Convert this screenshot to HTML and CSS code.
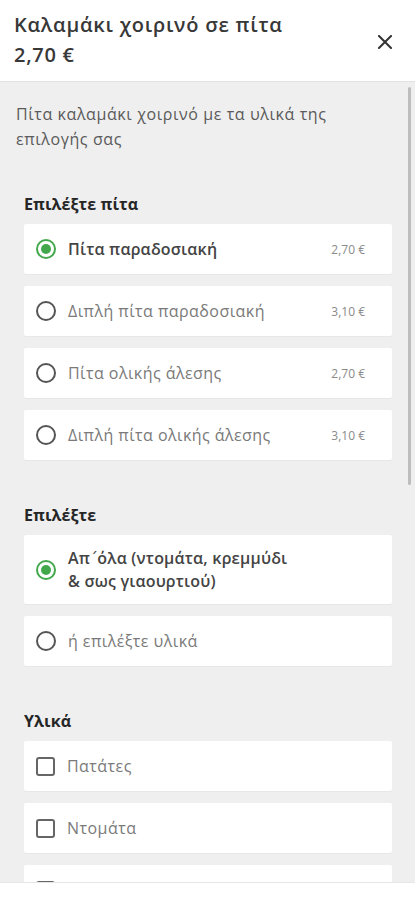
FILE: index.html
```html
<!DOCTYPE html>
<html lang="el">
<head>
<meta charset="utf-8">
<title>Καλαμάκι χοιρινό σε πίτα</title>
<link rel="stylesheet" href="styles.css">
</head>
<body>
<div class="sheet">
  <header class="head">
    <div class="head-text">
      <div class="title">Καλαμάκι χοιρινό σε πίτα</div>
      <div class="price">2,70 €</div>
    </div>
    <button class="close" aria-label="Κλείσιμο">
      <svg width="14" height="14" viewBox="0 0 14 14"><path d="M1 1L13 13M13 1L1 13" stroke="#333" stroke-width="2" fill="none" stroke-linecap="square"/></svg>
    </button>
  </header>

  <main class="content">
    <div class="scroll-thumb"></div>
    <p class="desc">Πίτα καλαμάκι χοιρινό με τα υλικά της επιλογής σας</p>

    <section class="section">
      <h2 class="heading">Επιλέξτε πίτα</h2>
      <div class="list">
        <label class="opt selected"><span class="radio"></span><span class="label">Πίτα παραδοσιακή</span><span class="opt-price">2,70 €</span></label>
        <label class="opt"><span class="radio"></span><span class="label">Διπλή πίτα παραδοσιακή</span><span class="opt-price">3,10 €</span></label>
        <label class="opt"><span class="radio"></span><span class="label">Πίτα ολικής άλεσης</span><span class="opt-price">2,70 €</span></label>
        <label class="opt"><span class="radio"></span><span class="label">Διπλή πίτα ολικής άλεσης</span><span class="opt-price">3,10 €</span></label>
      </div>
    </section>

    <section class="section">
      <h2 class="heading">Επιλέξτε</h2>
      <div class="list">
        <label class="opt selected"><span class="radio"></span><span class="label">Απ<span class="tonos">΄</span>όλα (ντομάτα, κρεμμύδι<br>&amp; σως γιαουρτιού)</span></label>
        <label class="opt"><span class="radio"></span><span class="label">ή επιλέξτε υλικά</span></label>
      </div>
    </section>

    <section class="section">
      <h2 class="heading">Υλικά</h2>
      <div class="list">
        <label class="opt"><span class="check"></span><span class="label">Πατάτες</span></label>
        <label class="opt"><span class="check"></span><span class="label">Ντομάτα</span></label>
        <label class="opt"><span class="check"></span><span class="label">Κρεμμύδι</span></label>
      </div>
    </section>
  </main>

  <footer class="foot"></footer>
</div>
</body>
</html>
```

FILE: styles.css
```css
* { box-sizing: border-box; }
html, body { margin: 0; padding: 0; }
body {
  font-family: "Open Sans", Roboto, "DejaVu Sans", sans-serif;
  background: #fff;
  color: #333;
}
.sheet {
  width: 415px;
  height: 900px;
  display: flex;
  flex-direction: column;
  overflow: hidden;
}
.head {
  height: 82px;
  flex: none;
  display: flex;
  align-items: flex-start;
  justify-content: space-between;
  padding: 11px 23px 0 14px;
  background: #fff;
  border-bottom: 1px solid #e2e2e2;
}
.title {
  font-size: 20px;
  font-weight: 600;
  line-height: 28px;
  letter-spacing: 0.75px;
  color: #383838;
}
.price {
  font-size: 20px;
  font-weight: 600;
  line-height: 32px;
  letter-spacing: 0.7px;
  color: #383838;
}
.close {
  margin-top: 24px;
  width: 14px;
  height: 14px;
  padding: 0;
  border: 0;
  background: none;
  display: flex;
}
.content {
  flex: 1;
  position: relative;
  overflow: hidden;
  background: #efefef;
  padding: 20px 15px 0 16px;
}
.scroll-thumb {
  position: absolute;
  top: 5px;
  right: 4px;
  width: 3px;
  height: 398px;
  background: #bdbdbd;
  border-radius: 2px;
}
.desc {
  margin: 0;
  max-width: 370px;
  font-size: 16px;
  line-height: 25px;
  letter-spacing: 0.6px;
  color: #5a5a5a;
}
.section {
  margin: 42px 8px 0 8px;
}
.section + .section { margin-top: 45px; }
.heading {
  margin: 0 0 10px 0;
  font-size: 16px;
  font-weight: 700;
  line-height: 20px;
  letter-spacing: 0.1px;
  color: #262626;
}
.list {
  display: flex;
  flex-direction: column;
  gap: 12px;
}
.opt {
  min-height: 50px;
  display: flex;
  align-items: center;
  gap: 12px;
  padding: 12px 27px 12px 12px;
  background: #fff;
  border-radius: 2px;
  box-shadow: 0 1px 0 rgba(0, 0, 0, 0.03);
}
.radio {
  flex: none;
  width: 20px;
  height: 20px;
  border: 2px solid #555;
  border-radius: 50%;
  position: relative;
}
.selected .radio {
  border-color: #43a84c;
}
.selected .radio::after {
  content: "";
  position: absolute;
  left: 3px;
  top: 3px;
  width: 10px;
  height: 10px;
  border-radius: 50%;
  background: #43a84c;
}
.check {
  flex: none;
  width: 19px;
  height: 19px;
  border: 2px solid #666;
  border-radius: 3px;
}
.label {
  flex: 1;
  font-size: 16px;
  line-height: 22px;
  letter-spacing: 0.45px;
  color: #7a7a7a;
}
.selected .label {
  color: #444;
  font-weight: 600;
  letter-spacing: 0.2px;
}
.tonos {
  font-family: "DejaVu Sans", sans-serif;
  font-weight: 400;
  margin: 0 -1px 0 0;
}
.opt-price {
  flex: none;
  font-size: 12px;
  color: #8a8a8a;
}
.foot {
  height: 18px;
  flex: none;
  background: #fff;
  border-top: 1px solid #e6e6e6;
}
```
